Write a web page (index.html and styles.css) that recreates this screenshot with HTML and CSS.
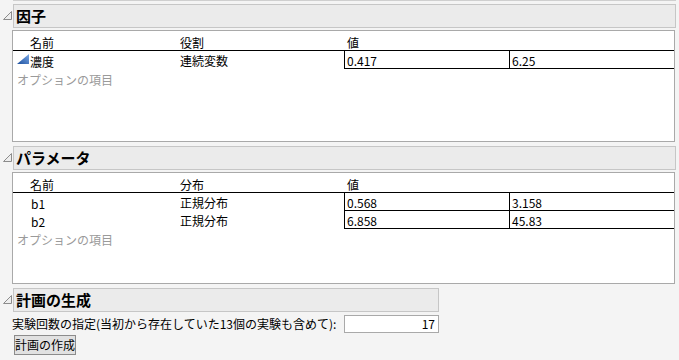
FILE: index.html
```html
<!DOCTYPE html>
<html lang="ja">
<head>
<meta charset="utf-8">
<link rel="stylesheet" href="styles.css">
</head>
<body>
<div class="topline"></div>

<section class="outline">
  <div class="outline-head">
    <svg class="disc" width="9" height="9" viewBox="0 0 9 9"><polygon points="0.5,8.5 8.5,0.5 8.5,8.5" fill="#eeeeee" stroke="#8c8c8c" stroke-width="1"/></svg>
    <div class="title-box">因子</div>
  </div>
  <div class="panel">
    <div class="hdr">
      <span class="c-name">名前</span><span class="c-role">役割</span><span class="c-val">値</span>
    </div>
    <div class="row">
      <span class="c-name"><svg class="tri" width="12" height="10" viewBox="0 0 12 10"><defs><linearGradient id="g1" x1="0" y1="1" x2="1" y2="0"><stop offset="0" stop-color="#1c4f9e"/><stop offset="1" stop-color="#7aa8e6"/></linearGradient></defs><polygon points="0,10 12,0 12,10" fill="url(#g1)"/></svg>濃度</span><span class="c-role">連続変数</span><span class="cell">0.417</span><span class="cell">6.25</span>
    </div>
    <div class="opt">オプションの項目</div>
  </div>
</section>

<section class="outline">
  <div class="outline-head">
    <svg class="disc" width="9" height="9" viewBox="0 0 9 9"><polygon points="0.5,8.5 8.5,0.5 8.5,8.5" fill="#eeeeee" stroke="#8c8c8c" stroke-width="1"/></svg>
    <div class="title-box">パラメータ</div>
  </div>
  <div class="panel">
    <div class="hdr">
      <span class="c-name">名前</span><span class="c-role">分布</span><span class="c-val">値</span>
    </div>
    <div class="row">
      <span class="c-name indent">b1</span><span class="c-role">正規分布</span><span class="cell">0.568</span><span class="cell">3.158</span>
    </div>
    <div class="row">
      <span class="c-name indent">b2</span><span class="c-role">正規分布</span><span class="cell">6.858</span><span class="cell">45.83</span>
    </div>
    <div class="opt">オプションの項目</div>
  </div>
</section>

<section class="outline narrow">
  <div class="outline-head">
    <svg class="disc" width="9" height="9" viewBox="0 0 9 9"><polygon points="0.5,8.5 8.5,0.5 8.5,8.5" fill="#eeeeee" stroke="#8c8c8c" stroke-width="1"/></svg>
    <div class="title-box">計画の生成</div>
  </div>
  <div class="runs">
    <span class="runs-label">実験回数の指定(当初から存在していた13個の実験も含めて):</span>
    <span class="runs-input">17</span>
  </div>
  <button class="btn" type="button">計画の作成</button>
</section>
</body>
</html>
```

FILE: styles.css
```css
html, body {
  margin: 0;
  padding: 0;
}
body {
  width: 679px;
  height: 360px;
  overflow: hidden;
  background: #f4f4f4;
  font-family: "Noto Sans CJK JP", "Noto Sans", sans-serif;
  font-size: 12px;
  color: #000;
}
.topline {
  height: 1px;
  background: #cfcfcf;
  margin: 0 3px 0 13px;
}
.outline {
  margin: 3px 3px 0 0;
}
.outline + .outline {
  margin-top: 4px;
}
.outline.narrow {
  margin-right: 240px;
}
.outline-head {
  display: flex;
  height: 24px;
}
.disc {
  flex: none;
  margin: 7px 1px 0 3px;
  display: block;
}
.title-box {
  flex: 1;
  box-sizing: border-box;
  height: 24px;
  border: 1px solid #c6c6c6;
  background: #ebebeb;
  display: flex;
  align-items: center;
  padding-left: 2px;
  font-size: 15px;
  font-weight: bold;
  line-height: 18px;
}
.panel {
  margin: 2px 1px 0 12px;
  box-sizing: border-box;
  height: 112px;
  border: 1px solid #a9a9a9;
  background: #fff;
}
.hdr, .row {
  display: flex;
  line-height: 14px;
}
.hdr {
  height: 14px;
  padding-top: 5px;
  border-bottom: 1px solid #000;
}
.c-name {
  width: 167px;
  padding-left: 17px;
  box-sizing: border-box;
  display: flex;
  align-items: flex-end;
}
.c-role {
  width: 164px;
}
.c-val {
  padding-left: 3px;
}
.row {
  height: 18px;
}
.row .c-name, .row .c-role {
  padding-top: 3px;
  box-sizing: border-box;
  height: 18px;
}
.row .c-name {
  padding-left: 4px;
}
.row .c-name.indent {
  padding-left: 18px;
}
.tri {
  display: block;
  margin: 0 1px 1px 0;
  align-self: flex-start;
  margin-top: 0;
}
.cell {
  width: 165px;
  box-sizing: border-box;
  height: 18px;
  padding: 3px 0 0 2px;
  border-left: 1px solid #000;
  border-bottom: 1px solid #000;
}
.opt {
  color: #9a9a9a;
  padding-left: 4px;
  margin-top: 4px;
  line-height: 14px;
}
.runs {
  display: flex;
  align-items: center;
  margin: 3px 0 0 12px;
}
.runs-label {
  width: 332px;
  flex: none;
  line-height: 14px;
}
.runs-input {
  flex: 1;
  box-sizing: border-box;
  height: 18px;
  border: 1px solid #a9a9a9;
  background: #fff;
  text-align: right;
  padding-right: 3px;
  line-height: 16px;
}
.btn {
  display: block;
  margin: 2px 0 0 14px;
  box-sizing: border-box;
  height: 20px;
  width: 62px;
  padding: 0;
  border: 1px solid #8c8c8c;
  border-radius: 0;
  background: #e1e1e1;
  font-family: "Noto Sans CJK JP", sans-serif;
  font-size: 12px;
  line-height: 16px;
  color: #000;
}
```
